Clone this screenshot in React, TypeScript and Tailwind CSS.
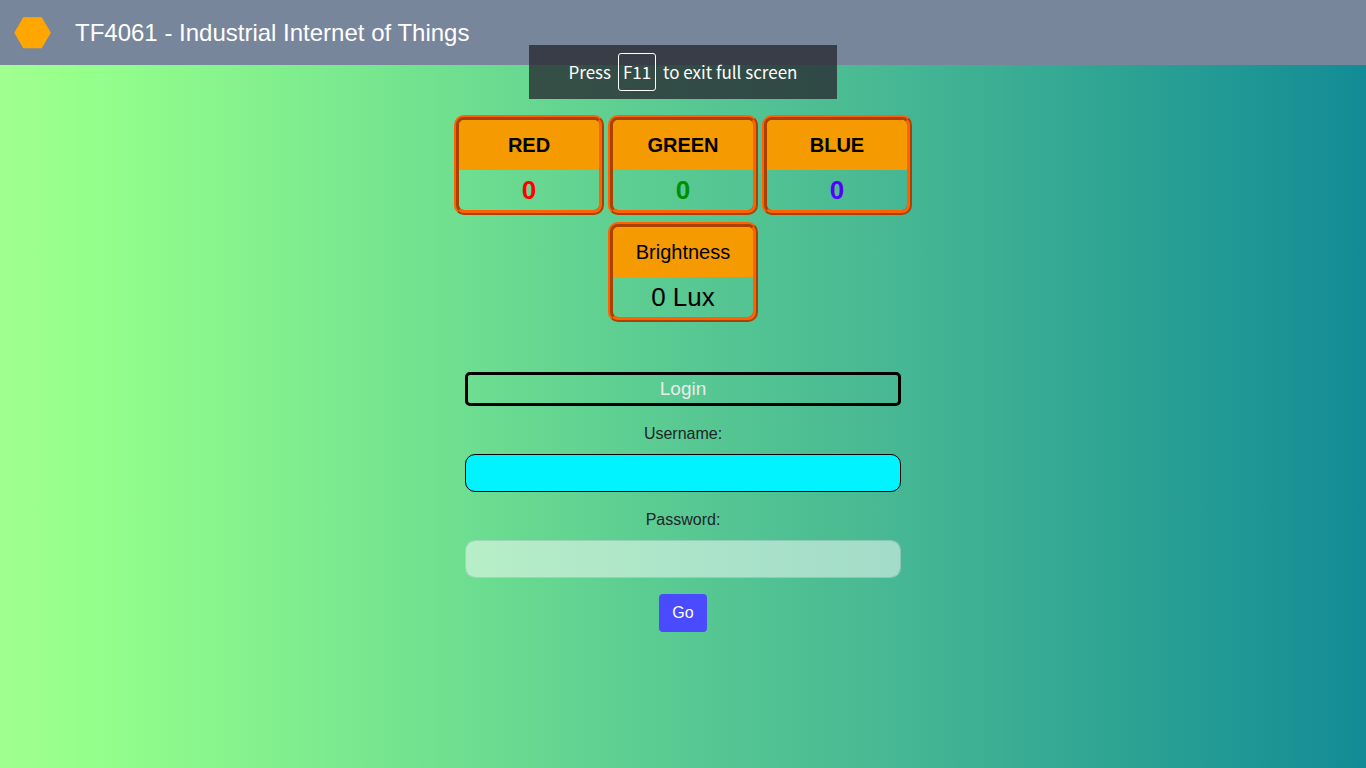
import React from "react";

type Reading = { label: string; value: string; tone: string };

const channels: Reading[] = [
  { label: "RED", value: "0", tone: "font-bold text-[#ff0000]" },
  { label: "GREEN", value: "0", tone: "font-bold text-[#008f00]" },
  { label: "BLUE", value: "0", tone: "font-bold text-[#5500ff]" },
];

function ReadingTable({ label, value, tone, bold }: Reading & { bold?: boolean }) {
  return (
    <table className="h-[100px] w-[150px] border-separate border-spacing-0 overflow-hidden rounded-[10px] border-[5px] border-[#ff6200] text-center [border-style:ridge]">
      <thead>
        <tr>
          <th
            scope="col"
            className={
              bold
                ? "h-[50px] bg-[#f59a00] p-0 text-xl font-bold text-black"
                : "h-[50px] bg-[#f59a00] p-0 text-xl font-normal text-black"
            }
          >
            {label}
          </th>
        </tr>
      </thead>
      <tbody>
        <tr>
          <td className={"h-10 p-0 text-[26px] leading-10 " + tone}>{value}</td>
        </tr>
      </tbody>
    </table>
  );
}

export default function App() {
  return (
    <div className="flex min-h-screen flex-col bg-[linear-gradient(to_right,#a0ff90,#94ff8b_7%,#6ede90_34%,#58c992_50%,#46b793_66%,#219994_90%,#138b96)] font-['Liberation_Sans',Arial,sans-serif] text-base text-[#212529]">
      <header className="flex h-[65px] items-center gap-6 bg-[#78869b] px-3.5">
        <svg className="h-9 w-[37px]" viewBox="0 0 37 36" aria-hidden="true">
          <path d="M9.2 2.2h18.5L36.9 17.7 27.7 33.2H9.2L.3 17.7z" fill="#ffa700" />
        </svg>
        <h1 className="text-2xl text-white">TF4061 - Industrial Internet of Things</h1>
      </header>

      <div
        role="status"
        className="absolute top-[45px] left-1/2 flex h-[54px] w-[308px] -translate-x-1/2 items-center justify-center gap-[7px] bg-[#292a32]/79 font-['Noto_Sans_CJK_JP',sans-serif] text-[17px] text-white"
      >
        <span>Press</span>
        <kbd className="flex h-[38px] w-[38px] items-center justify-center rounded-[3px] border border-white font-['Noto_Sans_CJK_JP',sans-serif] text-[17px]">
          F11
        </kbd>
        <span>to exit full screen</span>
      </div>

      <main className="flex flex-col items-center pt-[50px]">
        <section className="flex flex-col items-center gap-[7px]">
          <div className="flex gap-1">
            {channels.map((c) => (
              <ReadingTable key={c.label} {...c} bold />
            ))}
          </div>
          <ReadingTable label="Brightness" value="0 Lux" tone="text-black" />
        </section>

        <form
          className="mt-[50px] flex w-full max-w-[436px] flex-col items-center"
          onSubmit={(e) => e.preventDefault()}
        >
          <h2 className="w-full rounded-[5px] border-[3px] border-black text-center text-[19px] leading-7 text-[#ebebeb]">
            Login
          </h2>
          <label htmlFor="username" className="mt-4 leading-6">
            Username:
          </label>
          <input
            id="username"
            type="text"
            className="mt-2 h-[38px] w-full rounded-[10px] border border-black bg-[#00f3ff] px-3 outline-none"
          />
          <label htmlFor="password" className="mt-4 leading-6">
            Password:
          </label>
          <input
            id="password"
            type="password"
            className="mt-2 h-[38px] w-full rounded-[10px] border border-[#ced4da]/50 bg-white/50 bg-clip-padding px-3 outline-none"
          />
          <button type="submit" className="mt-4 h-[38px] rounded bg-[#4a4aff] px-[13px] text-white">
            Go
          </button>
        </form>
      </main>
    </div>
  );
}
